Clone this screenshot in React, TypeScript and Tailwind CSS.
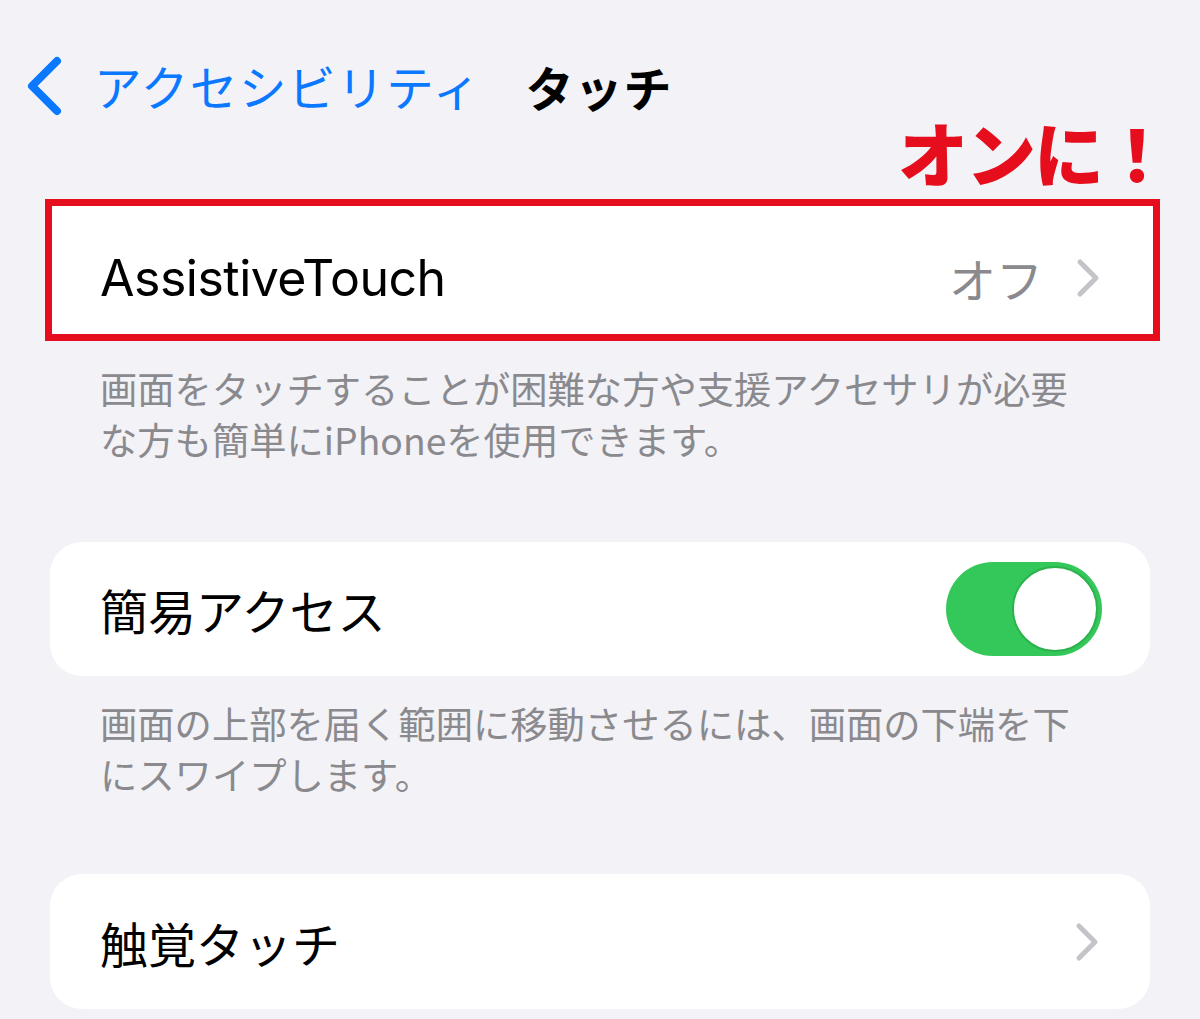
import React from 'react';

const jp = { fontFamily: '"Noto Sans CJK JP", "Noto Sans", sans-serif' };
const latin = { fontFamily: 'Inter, "Noto Sans CJK JP", sans-serif' };

const BackChevron = () => (
  <svg width="40" height="62" viewBox="0 0 40 62" fill="none">
    <path d="M33 6 L8 31 L33 56" stroke="#0a78ff" strokeWidth="8" strokeLinecap="round" strokeLinejoin="round" />
  </svg>
);

const RowChevron = () => (
  <svg width="26" height="40" viewBox="0 0 26 40" fill="none">
    <path d="M5 4 L21 20 L5 36" stroke="#c4c4c8" strokeWidth="5" strokeLinecap="round" strokeLinejoin="round" />
  </svg>
);

const Toggle = ({ on }: { on: boolean }) => (
  <div
    className={`w-[156px] h-[94px] rounded-full p-[4px] flex ${on ? 'bg-[#34c759] justify-end' : 'bg-[#e5e5ea] justify-start'}`}
  >
    <div className="w-[86px] h-[86px] rounded-full bg-white border-[2px] border-[#2bb24c]" />
  </div>
);

const Footer = ({ children }: { children: React.ReactNode }) => (
  <p className="pl-[100px] pr-[50px] pt-[22px] text-[37.3px] leading-[51px] text-[#8a8a8e]" style={jp}>
    {children}
  </p>
);

export default function App() {
  return (
    <div className="w-[1200px] h-[1019px] bg-[#f2f2f7] overflow-hidden" style={jp}>
      {/* navigation bar */}
      <div className="flex items-center h-[72px] mt-[50px] pl-[24px]">
        <BackChevron />
        <span className="ml-[30px] text-[47.5px] tracking-[1.6px] text-[#0a78ff]" style={jp}>アクセシビリティ</span>
        <span className="ml-[44px] text-[48px] font-bold text-black tracking-[1px]" style={jp}>タッチ</span>
      </div>

      <div className="flex justify-end pr-[30px] -mt-[8px] h-[76px] items-center">
        <span className="text-[70px] leading-none font-black text-[#e60d1c] tracking-[-2px]" style={jp}>オンに！</span>
      </div>

      {/* AssistiveTouch row, highlighted */}
      <div className="ml-[45px] w-[1115px] h-[142px] mt-[9px] border-[7px] border-[#e60d1c] bg-white flex items-center pt-[16px] pl-[48px] pr-[52px]">
        <span className="text-[50px] text-black tracking-[-0.5px]" style={latin}>AssistiveTouch</span>
        <span className="ml-auto text-[47px] text-[#8a8a8e]" style={jp}>オフ</span>
        <span className="ml-[32px] flex items-center"><RowChevron /></span>
      </div>

      <Footer>
        画面をタッチすることが困難な方や支援アクセサリが必要
        <br />
        な方も簡単にiPhoneを使用できます。
      </Footer>

      <div className="mx-[50px] mt-[77px] h-[134px] rounded-[32px] bg-white flex items-center pl-[50px] pr-[48px]">
        <span className="text-[48px] text-black">簡易アクセス</span>
        <div className="ml-auto">
          <Toggle on />
        </div>
      </div>

      <Footer>
        画面の上部を届く範囲に移動させるには、画面の下端を下
        <br />
        にスワイプします。
      </Footer>

      <div className="mx-[50px] mt-[74px] h-[135px] rounded-[32px] bg-white flex items-center pl-[50px] pr-[50px]">
        <span className="text-[48px] text-black">触覚タッチ</span>
        <span className="ml-auto flex items-center"><RowChevron /></span>
      </div>
    </div>
  );
}
